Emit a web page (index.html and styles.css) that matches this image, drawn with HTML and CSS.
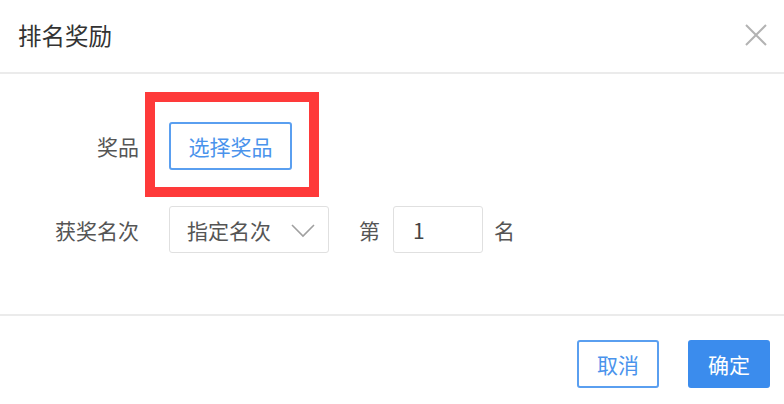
FILE: index.html
```html
<!DOCTYPE html>
<html lang="zh-CN">
<head>
    <meta charset="UTF-8">
    <meta name="viewport" content="width=device-width, initial-scale=1.0">
    <title>排名奖励</title>
    <link rel="stylesheet" href="styles.css">
</head>
<body>

<div class="dialog">
    <div class="dialog-header">
        <span class="dialog-title">排名奖励</span>
        <span class="dialog-close">
            <svg width="22" height="22" viewBox="0 0 22 22">
                <path d="M1 1 L21 21 M21 1 L1 21" stroke="#b3b3b3" stroke-width="2" fill="none"/>
            </svg>
        </span>
    </div>

    <div class="dialog-body">
        <div class="form-row">
            <div class="form-label">奖品</div>
            <div class="form-control">
                <div class="mark-wrap">
                    <button class="btn btn-plain">选择奖品</button>
                    <div class="mark-box"></div>
                </div>
            </div>
        </div>
        <div class="form-row">
            <div class="form-label">获奖名次</div>
            <div class="form-control">
                <div class="select">
                    <span class="select-text">指定名次</span>
                    <svg class="select-arrow" width="24" height="14" viewBox="0 0 24 14">
                        <path d="M1 1 L12 12 L23 1" stroke="#a0a0a0" stroke-width="1.6" fill="none"/>
                    </svg>
                </div>
                <span class="inline-text rank-prefix">第</span>
                <input class="input" type="text" value="1">
                <span class="inline-text rank-suffix">名</span>
            </div>
        </div>
    </div>

    <div class="dialog-footer">
        <button class="btn btn-plain btn-footer">取消</button>
        <button class="btn btn-primary btn-footer">确定</button>
    </div>
</div>

</body>
</html>
```

FILE: styles.css
```css
body {
    margin: 0;
    background-color: white;
    font-family: "Noto Sans CJK SC", "Liberation Sans", sans-serif;
}

.dialog {
    width: 784px;
    height: 404px;
    display: flex;
    flex-direction: column;
    background: white;
}

.dialog-header {
    height: 72px;
    display: flex;
    align-items: center;
    justify-content: space-between;
    padding: 0 17px 0 18px;
    border-bottom: 2px solid #ebebeb;
}

.dialog-title {
    font-size: 23.5px;
    color: #333333;
    margin-top: -2px;
}

.dialog-close {
    display: flex;
    margin-top: -2px;
}

.dialog-body {
    padding: 48px 0 0 0;
    height: 192px;
    display: flex;
    flex-direction: column;
    gap: 36px;
    border-bottom: 2px solid #ebebeb;
}

.form-row {
    display: flex;
    align-items: center;
}

.form-label {
    width: 139px;
    text-align: right;
    font-size: 21px;
    color: #555555;
    padding-right: 30px;
}

.form-control {
    display: flex;
    align-items: center;
}

.mark-wrap {
    position: relative;
    display: flex;
}

/* red annotation frame drawn over the button */
.mark-box {
    position: absolute;
    top: -30px;
    left: -24px;
    right: -27px;
    bottom: -27px;
    border: 10px solid #fe3a3a;
}

.btn {
    font-family: "Noto Sans CJK SC", "Liberation Sans", sans-serif;
    font-size: 21px;
    height: 48px;
    border-radius: 3px;
    cursor: pointer;
    padding: 0;
}

.btn-plain {
    width: 123px;
    background: white;
    color: #4a93ec;
    border: 2px solid #5a9ff0;
}

.btn-primary {
    background: #3b8ced;
    color: white;
    border: 2px solid #3b8ced;
}

.select {
    width: 160px;
    height: 47px;
    box-sizing: border-box;
    border: 1.5px solid #e0e0e0;
    border-radius: 3px;
    display: flex;
    align-items: center;
    justify-content: space-between;
    padding: 0 13px 0 17px;
}

.select-text {
    font-size: 21px;
    color: #555555;
}

.select-arrow {
    margin-top: 2px;
}

.inline-text {
    font-size: 21px;
    color: #555555;
}

.rank-prefix {
    margin: 0 13px 0 30px;
}

.rank-suffix {
    margin-left: 11px;
}

.input {
    width: 90px;
    height: 47px;
    box-sizing: border-box;
    border: 1.5px solid #e0e0e0;
    border-radius: 3px;
    font-family: "Noto Sans CJK SC", "Liberation Sans", sans-serif;
    font-size: 21px;
    color: #444444;
    padding: 0 0 0 19px;
    outline: none;
}

.dialog-footer {
    display: flex;
    justify-content: flex-end;
    gap: 29px;
    padding: 24px 14px 0 0;
}

.btn-footer {
    width: 82px;
}
```
